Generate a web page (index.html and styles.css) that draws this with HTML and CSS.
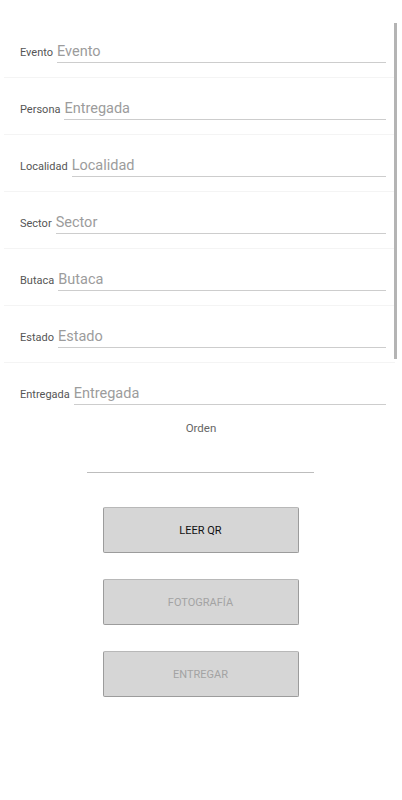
FILE: index.html
```html
<!DOCTYPE html>
<html>

<head>
    <title>Entrega</title>
    <link rel="stylesheet" href="styles.css">
</head>

<body>
    <div class="list">
        <div class="row"><span class="label">Evento</span><span class="field">Evento</span></div>
        <div class="row"><span class="label">Persona</span><span class="field">Entregada</span></div>
        <div class="row"><span class="label">Localidad</span><span class="field">Localidad</span></div>
        <div class="row"><span class="label">Sector</span><span class="field">Sector</span></div>
        <div class="row"><span class="label">Butaca</span><span class="field">Butaca</span></div>
        <div class="row"><span class="label">Estado</span><span class="field">Estado</span></div>
        <div class="row last"><span class="label">Entregada</span><span class="field">Entregada</span></div>
        <div class="scrollbar"></div>
    </div>

    <div class="orden">
        <p class="orden-label">Orden</p>
        <div class="orden-input"></div>
    </div>

    <div class="buttons">
        <button class="btn">LEER QR</button>
        <button class="btn disabled">FOTOGRAFÍA</button>
        <button class="btn disabled">ENTREGAR</button>
    </div>
</body>

</html>
```

FILE: styles.css
```css
body {
    margin: 0;
    font-family: Roboto, "Liberation Sans", sans-serif;
    background-color: white;
}

.list {
    position: relative;
    padding-top: 21px;
}

.row {
    display: flex;
    align-items: baseline;
    height: 57px;
    box-sizing: border-box;
    padding: 22px 9px 0 16px;
    margin: 0 7px 0 4px;
    border-bottom: 1px solid #f4f4f4;
}

.row.last {
    border-bottom: none;
}

.label {
    font-size: 11px;
    color: #555;
    margin-right: 4px;
}

.field {
    flex: 1;
    font-size: 14.5px;
    color: #9c9c9c;
    padding-bottom: 2px;
    border-bottom: 1.5px solid #cdcdcd;
}

.scrollbar {
    position: absolute;
    right: 5px;
    top: 23px;
    width: 3px;
    height: 336px;
    background-color: #b4b4b4;
}

.orden {
    display: flex;
    flex-direction: column;
    align-items: center;
}

.orden-label {
    margin: 0;
    font-size: 11.5px;
    color: #666;
    line-height: 16px;
}

.orden-input {
    width: 227px;
    height: 36px;
    border-bottom: 1.5px solid #bdbdbd;
    margin-left: -1px;
}

.buttons {
    display: flex;
    flex-direction: column;
    align-items: center;
    gap: 26px;
    padding-top: 34px;
}

.btn {
    width: 196px;
    height: 46px;
    margin-left: -1px;
    background-color: #d6d6d6;
    border: 1px solid #9c9c9c;
    border-top-color: #b8b8b8;
    border-radius: 2px;
    font-family: Roboto, "Liberation Sans", sans-serif;
    font-size: 11px;
    color: #111;
}

.btn.disabled {
    color: #a3a3a3;
}
```
